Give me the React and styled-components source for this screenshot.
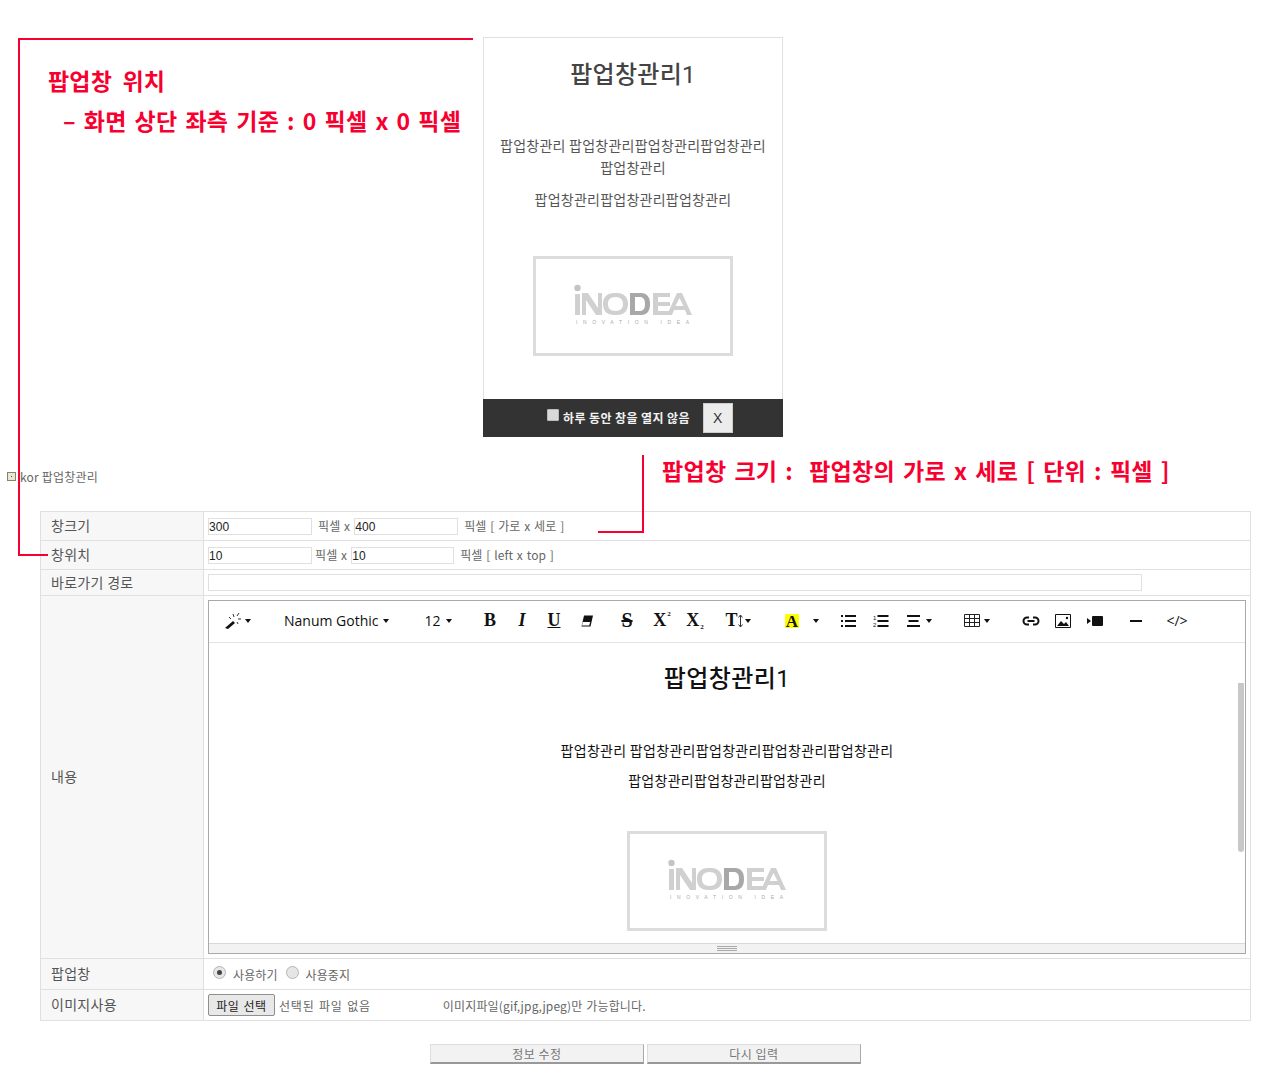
import React from "react";
import styled, { createGlobalStyle } from "styled-components";

const Global = createGlobalStyle`
html, body { margin: 0; padding: 0; background: #fff; }
body { font-family: "Noto Sans CJK KR", "Liberation Sans", sans-serif; font-size: 12px; color: #555; }
`;

const Page = styled.div`
  position: relative;
  width: 1272px;
  height: 1080px;
  overflow: hidden;
`;

const RedLine = styled.i`
  position: absolute;
  background: #f70030;
  left: ${(p) => p.$x}px;
  top: ${(p) => p.$y}px;
  width: ${(p) => p.$w}px;
  height: ${(p) => p.$h}px;
`;

const Top = styled.section`
  display: flex;
  height: 437px;
  padding-top: 37px;
  box-sizing: border-box;
`;

const Note = styled.div`
  width: 483px;
  flex: none;
  padding: 26px 0 0 48px;
  box-sizing: border-box;
  color: #f70030;
  font-weight: 700;
`;

const NoteTitle = styled.div`
  font-size: 23px;
  line-height: 34px;
  letter-spacing: 0.2px;
  word-spacing: 5px;
`;

const NoteSub = styled.div`
  font-size: 23px;
  line-height: 34px;
  margin-top: 6px;
  padding-left: 15px;
  letter-spacing: 0.3px;
  word-spacing: 2.4px;
  white-space: nowrap;
`;

const Popup = styled.div`
  width: 300px;
  height: 400px;
  box-sizing: border-box;
  border: 1px solid #e0e0e0;
  border-bottom: 0;
  display: flex;
  flex-direction: column;
  align-items: center;
  text-align: center;
  position: relative;
`;

const PopupTitle = styled.h2`
  margin: 18px 0 0;
  font-family: Roboto, "Noto Sans CJK KR", sans-serif;
  font-size: 24px;
  line-height: 38px;
  font-weight: 500;
  letter-spacing: 0.3px;
  color: #444;
`;

const Digit = styled.span`
  font-weight: 400;
`;

const PopupText = styled.p`
  margin: ${(p) => p.$mt}px 0 0;
  width: 270px;
  font-size: 14px;
  line-height: 22px;
  letter-spacing: 0.25px;
  color: #555;
`;

const LogoBox = styled.div`
  width: 200px;
  height: 100px;
  flex: none;
  box-sizing: border-box;
  border: 3px solid #dcdcdc;
  background: #fff;
  display: flex;
  align-items: center;
  justify-content: center;
  margin-top: ${(p) => p.$mt || 0}px;
`;

const PopupBar = styled.div`
  margin-top: auto;
  width: 300px;
  margin-left: -1px;
  margin-right: -1px;
  height: 38px;
  background: #333;
  display: flex;
  align-items: center;
  padding-left: 64px;
  box-sizing: border-box;
  color: #f2f2f2;
  font-size: 12px;
  font-weight: 700;
  letter-spacing: 0.4px;
`;

const BarLabel = styled.span`
  margin-bottom: 2px;
`;

const FakeCheck = styled.span`
  width: 12px;
  height: 12px;
  margin: -6px 4px 0 0;
  background: #d9d9d9;
  border: 1px solid #bbb;
  box-sizing: border-box;
  border-radius: 1px;
`;

const CloseBtn = styled.span`
  width: 30px;
  height: 30px;
  margin-left: 13px;
  background: #ececec;
  border: 1px solid #ccc;
  box-sizing: border-box;
  color: #333;
  font-size: 14px;
  font-weight: 400;
  font-family: "Liberation Sans", sans-serif;
  display: flex;
  align-items: center;
  justify-content: center;
`;

const Crumb = styled.div`
  display: flex;
  align-items: center;
  height: 18px;
  margin-top: 30px;
  padding-left: 7px;
  font-size: 12px;
  letter-spacing: 0.2px;
  color: #666;
`;

const CrumbIcon = styled.span`
  width: 9px;
  height: 9px;
  margin-right: 4px;
  box-sizing: border-box;
  border: 1px solid #8a8460;
  background: #e9e6d6;
  display: flex;
  align-items: center;
  justify-content: center;
  &::after {
    content: "";
    width: 1px;
    height: 1px;
    background: #555;
  }
`;

const SizeNote = styled.div`
  position: absolute;
  left: 662px;
  top: 453px;
  color: #f70030;
  font-size: 23px;
  line-height: 34px;
  font-weight: 700;
  white-space: pre;
  letter-spacing: 0.3px;
  word-spacing: 2.5px;
`;

const Table = styled.div`
  margin: 26px 0 0 40px;
  width: 1211px;
  box-sizing: border-box;
  border: 1px solid #e0e0e0;
  border-bottom: 0;
`;

const Row = styled.div`
  display: flex;
  height: ${(p) => p.$h}px;
  border-bottom: 1px solid #e0e0e0;
  box-sizing: border-box;
`;

const Label = styled.div`
  width: 163px;
  flex: none;
  box-sizing: border-box;
  padding: 0 0 2px 10px;
  background: #f7f7f7;
  border-right: 1px solid #e0e0e0;
  display: flex;
  align-items: center;
  font-size: 14px;
  letter-spacing: 0.3px;
  color: #555;
`;

const Cell = styled.div`
  flex: 1;
  min-width: 0;
  display: flex;
  align-items: center;
  padding-left: 4px;
  font-size: 12px;
  letter-spacing: 0.1px;
  word-spacing: 1px;
  color: #666;
  white-space: pre;
`;

const EditorCell = styled.div`
  flex: 1;
  min-width: 0;
  padding: 4px 4px 0;
`;

const Field = styled.div`
  width: ${(p) => p.$w}px;
  height: 17px;
  box-sizing: border-box;
  border: 1px solid #e0e0e0;
  background: #fff;
  font-family: "Liberation Sans", sans-serif;
  font-size: 12px;
  line-height: 17px;
  padding-left: 0;
  color: #222;
  margin-right: ${(p) => p.$mr || 0}px;
`;

const Unit = styled.span`
  margin-right: ${(p) => p.$mr || 0}px;
  margin-bottom: ${(p) => (p.$flat ? 0 : 2)}px;
  letter-spacing: ${(p) => p.$ls || 0.1}px;
`;

const Editor = styled.div`
  width: 1038px;
  height: 354px;
  box-sizing: border-box;
  border: 1px solid #a9a9a9;
  display: flex;
  flex-direction: column;
`;

const Toolbar = styled.div`
  height: 39px;
  padding-bottom: 2px;
  flex: none;
  border-bottom: 1px solid #e4e4e4;
  display: flex;
  align-items: center;
  position: relative;
  color: #111;
`;

const Tool = styled.span`
  flex: none;
  width: ${(p) => p.$w}px;
  margin-left: ${(p) => p.$ml || 0}px;
  display: flex;
  align-items: center;
  justify-content: ${(p) => (p.$start ? "flex-start" : "center")};
  font-family: ${(p) => (p.$sans ? '"Open Sans", "Liberation Sans", sans-serif' : '"Liberation Serif", serif')};
  font-size: ${(p) => p.$fs || 18}px;
  font-weight: ${(p) => (p.$b ? 700 : 400)};
  font-style: ${(p) => (p.$i ? "italic" : "normal")};
  text-decoration: ${(p) => p.$deco || "none"};
  white-space: nowrap;
  color: #111;
`;

const Caret = styled.span`
  display: inline-block;
  margin-left: ${(p) => (p.$ml === undefined ? 4 : p.$ml)}px;
  width: 0;
  height: 0;
  border-left: 3px solid transparent;
  border-right: 3px solid transparent;
  border-top: 4px solid #111;
`;

const Sup = styled.span`
  font-size: 7px;
  align-self: ${(p) => (p.$low ? "flex-end" : "flex-start")};
  margin-left: 1px;
`;

const Marked = styled.span`
  background: #ff0;
  width: 14px;
  height: 14px;
  line-height: 15px;
  text-align: center;
  font-family: "Liberation Serif", serif;
  font-weight: 700;
  font-size: 17px;
`;

const Body = styled.div`
  flex: 1;
  position: relative;
  display: flex;
  flex-direction: column;
  align-items: center;
  overflow: hidden;
  color: #111;
`;

const BodyTitle = styled.h2`
  margin: 17px 0 0;
  font-family: Roboto, "Noto Sans CJK KR", sans-serif;
  font-size: 24px;
  line-height: 38px;
  font-weight: 500;
  letter-spacing: 0.4px;
  color: #111;
`;

const BodyText = styled.p`
  margin: ${(p) => p.$mt}px 0 0;
  font-size: 14px;
  line-height: 30px;
  letter-spacing: 0.3px;
  color: #111;
  white-space: nowrap;
`;

const Scrollbar = styled.div`
  position: absolute;
  right: 1px;
  top: 40px;
  width: 6px;
  height: 169px;
  background: #c8c8c8;
  border-radius: 0 0 3px 3px;
`;

const Resizer = styled.div`
  height: 9px;
  flex: none;
  background: #f2f2f2;
  border-top: 1px solid #d8d8d8;
  display: flex;
  align-items: center;
  justify-content: center;
  &::after {
    content: "";
    width: 20px;
    height: 5px;
    border-top: 1px solid #aaa;
    border-bottom: 1px solid #aaa;
    background: linear-gradient(#aaa, #aaa) center / 100% 1px no-repeat;
    box-sizing: border-box;
  }
`;

const Radio = styled.span`
  width: 13px;
  height: 13px;
  border-radius: 50%;
  box-sizing: border-box;
  border: 1px solid #b5b5b5;
  background: #e6e6e6;
  display: flex;
  align-items: center;
  justify-content: center;
  margin: -4px ${(p) => p.$mr}px 0 ${(p) => p.$ml}px;
  &::after {
    content: "";
    width: 5px;
    height: 5px;
    border-radius: 50%;
    background: ${(p) => (p.$on ? "#444" : "transparent")};
  }
`;

const FileBtn = styled.span`
  width: 67px;
  height: 22px;
  box-sizing: border-box;
  border: 1px solid #8f8f8f;
  border-radius: 2px;
  background: #e8e8e8;
  color: #222;
  font-size: 12px;
  letter-spacing: 0.5px;
  display: flex;
  align-items: center;
  justify-content: center;
  margin-right: 4px;
`;

const Actions = styled.div`
  display: flex;
  gap: 3px;
  margin: 23px 0 0 430px;
`;

const ActionBtn = styled.span`
  width: 214px;
  height: 20px;
  box-sizing: border-box;
  background: #f2f2f2;
  border: 1px solid #ddd;
  border-bottom: 2px solid #999;
  border-right: 1px solid #aaa;
  color: #777;
  font-size: 12px;
  letter-spacing: 0.5px;
  display: flex;
  align-items: center;
  justify-content: center;
`;

const RuleBar = styled.span`
  width: 12px;
  height: 2px;
  background: #111;
`;

function Logo() {
  return (
    <svg width="120" height="50" viewBox="0 0 120 50">
      <circle cx="4.500" cy="7" r="3.200" fill="#c4c4c4" />
      <rect x="2" y="13" width="5" height="21" fill="#d0d0d0" />
      <path d="M9 34V12h6l10 15V12h4v22h-6L13 19v15z" fill="#d0d0d0" />
      <path fillRule="evenodd" d="M30 23c0-7 4-11 11-11h3c7 0 11 4 11 11s-4 11-11 11h-3c-7 0-11-4-11-11zm5 0c0 4 2 7 7.500 7s7.500-3 7.500-7-2-7-7.500-7-7.500 3-7.500 7z" fill="#d0d0d0" />
      <path fillRule="evenodd" d="M57 12h11c6 0 9 4 9 11s-3 11-9 11H57zm5 4v14h5c3 0 5-2 5-7s-2-7-5-7z" fill="#a8a8a8" />
      <path d="M80 12h17v4H85v5h12v4H85v5h12v4H80z" fill="#d0d0d0" />
      <path d="M104 12h5l10 22h-5l-2-5h-11l-2 5h-5l10-22zm2.500 5-4 8h8z" fill="#d0d0d0" />
      <text x="3" y="43" fontSize="5" fontFamily="Liberation Sans" fill="#aaa" textLength="113">INOVATION IDEA</text>
    </svg>
  );
}

function Wand() {
  return (
    <svg width="18" height="18" viewBox="0 0 18 18">
      <path d="M1 16l8-7 2 2-7 6z" fill="#111" />
      <path d="M9 2l1 3M15 1l-2 3M17 7h-3M14 12l-1-2M5 5l2 2" stroke="#333" strokeWidth="1" />
    </svg>
  );
}

function Eraser() {
  return (
    <svg width="14" height="14" viewBox="0 0 14 14">
      <path d="M4 1.500h9l-2.500 11h-9z" fill="#111" />
      <path d="M2.700 8h7.500l-1 3.500H2z" fill="#fff" />
    </svg>
  );
}

function ListBullet() {
  return (
    <svg width="16" height="14" viewBox="0 0 16 14">
      <path d="M0 1h2v2H0zM0 6h2v2H0zM0 11h2v2H0z" fill="#111" />
      <path d="M4 2h11M4 7h11M4 12h11" stroke="#111" strokeWidth="2" />
    </svg>
  );
}

function ListNumber() {
  return (
    <svg width="16" height="14" viewBox="0 0 16 14">
      <text x="0" y="6" fontSize="6" fontFamily="Liberation Sans" fill="#111">1</text>
      <text x="0" y="13" fontSize="6" fontFamily="Liberation Sans" fill="#111">2</text>
      <path d="M4.500 2h11M4.500 7h11M4.500 12h11" stroke="#111" strokeWidth="2" />
    </svg>
  );
}

function Align() {
  return (
    <svg width="14" height="12" viewBox="0 0 14 12">
      <path d="M0 1h13M1.500 6h10M0 11h13" stroke="#111" strokeWidth="2" />
    </svg>
  );
}

function Grid() {
  return (
    <svg width="16" height="13" viewBox="0 0 16 13">
      <path d="M.5.500h15v12H.5zM.5 4.500h15M.5 8.500h15M5.500.500v12M10.500.500v12" fill="none" stroke="#222" strokeWidth="1" />
    </svg>
  );
}

function Chain() {
  return (
    <svg width="18" height="12" viewBox="0 0 18 12">
      <path d="M7 2.500H5a3.500 3.500 0 0 0 0 7h2M11 2.500h2a3.500 3.500 0 0 1 0 7h-2M5.500 6h7" fill="none" stroke="#111" strokeWidth="2" />
    </svg>
  );
}

function Pic() {
  return (
    <svg width="16" height="14" viewBox="0 0 16 14">
      <path d="M.5.500h15v13H.5z" fill="#fff" stroke="#111" />
      <path d="M2 12l4-5 3 3 2-2 3 4z" fill="#111" />
      <circle cx="12" cy="4" r="1.200" fill="#111" />
    </svg>
  );
}

function Video() {
  return (
    <svg width="16" height="10" viewBox="0 0 16 10">
      <path d="M0 2l4 3-4 3z" fill="#111" />
      <rect x="5" y="0" width="11" height="10" rx="1" fill="#111" />
    </svg>
  );
}

function TextHeight() {
  return (
    <svg width="5" height="14" viewBox="0 0 5 14">
      <path d="M2.500 1v12M.5 3.500l2-2.500 2 2.500M.5 10.500l2 2.500 2-2.500" fill="none" stroke="#333" strokeWidth="1" />
    </svg>
  );
}

export default function App() {
  return (
    <Page>
      <Global />
      <RedLine $x={18} $y={38} $w={2} $h={518} />
      <RedLine $x={18} $y={38} $w={455} $h={2} />
      <RedLine $x={18} $y={554} $w={30} $h={2} />
      <RedLine $x={642} $y={455} $w={2} $h={78} />
      <RedLine $x={598} $y={531} $w={46} $h={2} />
      <SizeNote>{"팝업창 크기 :  팝업창의 가로 x 세로 [ 단위 : 픽셀 ]"}</SizeNote>

      <Top>
        <Note>
          <NoteTitle>팝업창 위치</NoteTitle>
          <NoteSub>– 화면 상단 좌측 기준 : 0 픽셀 x 0 픽셀</NoteSub>
        </Note>
        <Popup>
          <PopupTitle>팝업창관리<Digit>1</Digit></PopupTitle>
          <PopupText $mt={40}>팝업창관리 팝업창관리팝업창관리팝업창관리 팝업창관리</PopupText>
          <PopupText $mt={10}>팝업창관리팝업창관리팝업창관리</PopupText>
          <LogoBox $mt={46}>
            <Logo />
          </LogoBox>
          <PopupBar>
            <FakeCheck />
            <BarLabel>하루 동안 창을 열지 않음</BarLabel>
            <CloseBtn>X</CloseBtn>
          </PopupBar>
        </Popup>
      </Top>

      <Crumb>
        <CrumbIcon />
        kor 팝업창관리
      </Crumb>

      <Table>
        <Row $h={29}>
          <Label>창크기</Label>
          <Cell>
            <Field $w={104} $mr={6}>300</Field>
            <Unit $mr={4}>픽셀 x</Unit>
            <Field $w={104} $mr={6}>400</Field>
            <Unit>픽셀 [ 가로 x 세로 ]</Unit>
          </Cell>
        </Row>
        <Row $h={29}>
          <Label>창위치</Label>
          <Cell>
            <Field $w={104} $mr={3}>10</Field>
            <Unit $mr={4}>픽셀 x</Unit>
            <Field $w={103} $mr={6}>10</Field>
            <Unit>픽셀 [ left x top ]</Unit>
          </Cell>
        </Row>
        <Row $h={26}>
          <Label>바로가기 경로</Label>
          <Cell>
            <Field $w={934} />
          </Cell>
        </Row>
        <Row $h={363}>
          <Label>내용</Label>
          <EditorCell>
            <Editor>
              <Toolbar>
                <Tool $w={29} $ml={14}><Wand /><Caret $ml={3} /></Tool>
                <Tool $w={108} $ml={32} $sans $fs={14} $start>Nanum Gothic<Caret /></Tool>
                <Tool $w={28} $ml={32} $sans $fs={14}>12<Caret $ml={5} /></Tool>
                <Tool $w={16} $ml={30} $b>B</Tool>
                <Tool $w={16} $ml={16} $b $i>I</Tool>
                <Tool $w={16} $ml={16} $b $deco="underline">U</Tool>
                <Tool $w={16} $ml={17}><Eraser /></Tool>
                <Tool $w={16} $ml={24} $fs={20} $b $deco="line-through">S</Tool>
                <Tool $w={20} $ml={17} $b>X<Sup>2</Sup></Tool>
                <Tool $w={20} $ml={13} $b>X<Sup $low>2</Sup></Tool>
                <Tool $w={30} $ml={18} $b>T<TextHeight /><Caret $ml={2} /></Tool>
                <Tool $w={14} $ml={32}><Marked>A</Marked></Tool>
                <Tool $w={8} $ml={13}><Caret $ml={0} /></Tool>
                <Tool $w={16} $ml={21}><ListBullet /></Tool>
                <Tool $w={16} $ml={16}><ListNumber /></Tool>
                <Tool $w={26} $ml={17}><Align /><Caret $ml={5} /></Tool>
                <Tool $w={28} $ml={31}><Grid /><Caret $ml={4} /></Tool>
                <Tool $w={18} $ml={31}><Chain /></Tool>
                <Tool $w={16} $ml={15}><Pic /></Tool>
                <Tool $w={16} $ml={16}><Video /></Tool>
                <Tool $w={12} $ml={27}><RuleBar /></Tool>
                <Tool $w={22} $ml={24} $sans $fs={14}>{"</>"}</Tool>
              </Toolbar>
              <Body>
                <BodyTitle>팝업창관리<Digit>1</Digit></BodyTitle>
                <BodyText $mt={37}>팝업창관리 팝업창관리팝업창관리팝업창관리팝업창관리</BodyText>
                <BodyText $mt={0}>팝업창관리팝업창관리팝업창관리</BodyText>
                <LogoBox $mt={36}>
                  <Logo />
                </LogoBox>
                <Scrollbar />
              </Body>
              <Resizer />
            </Editor>
          </EditorCell>
        </Row>
        <Row $h={31}>
          <Label>팝업창</Label>
          <Cell>
            <Radio $on $ml={5} $mr={7} />
            <Unit $flat>사용하기</Unit>
            <Radio $ml={8} $mr={7} />
            <Unit $flat>사용중지</Unit>
          </Cell>
        </Row>
        <Row $h={31}>
          <Label>이미지사용</Label>
          <Cell>
            <FileBtn>파일 선택</FileBtn>
            <Unit $flat $mr={72} $ls={0.8}>선택된 파일 없음</Unit>
            <Unit $flat $ls={0.15}>이미지파일(gif,jpg,jpeg)만 가능합니다.</Unit>
          </Cell>
        </Row>
      </Table>

      <Actions>
        <ActionBtn>정보 수정</ActionBtn>
        <ActionBtn>다시 입력</ActionBtn>
      </Actions>
    </Page>
  );
}
